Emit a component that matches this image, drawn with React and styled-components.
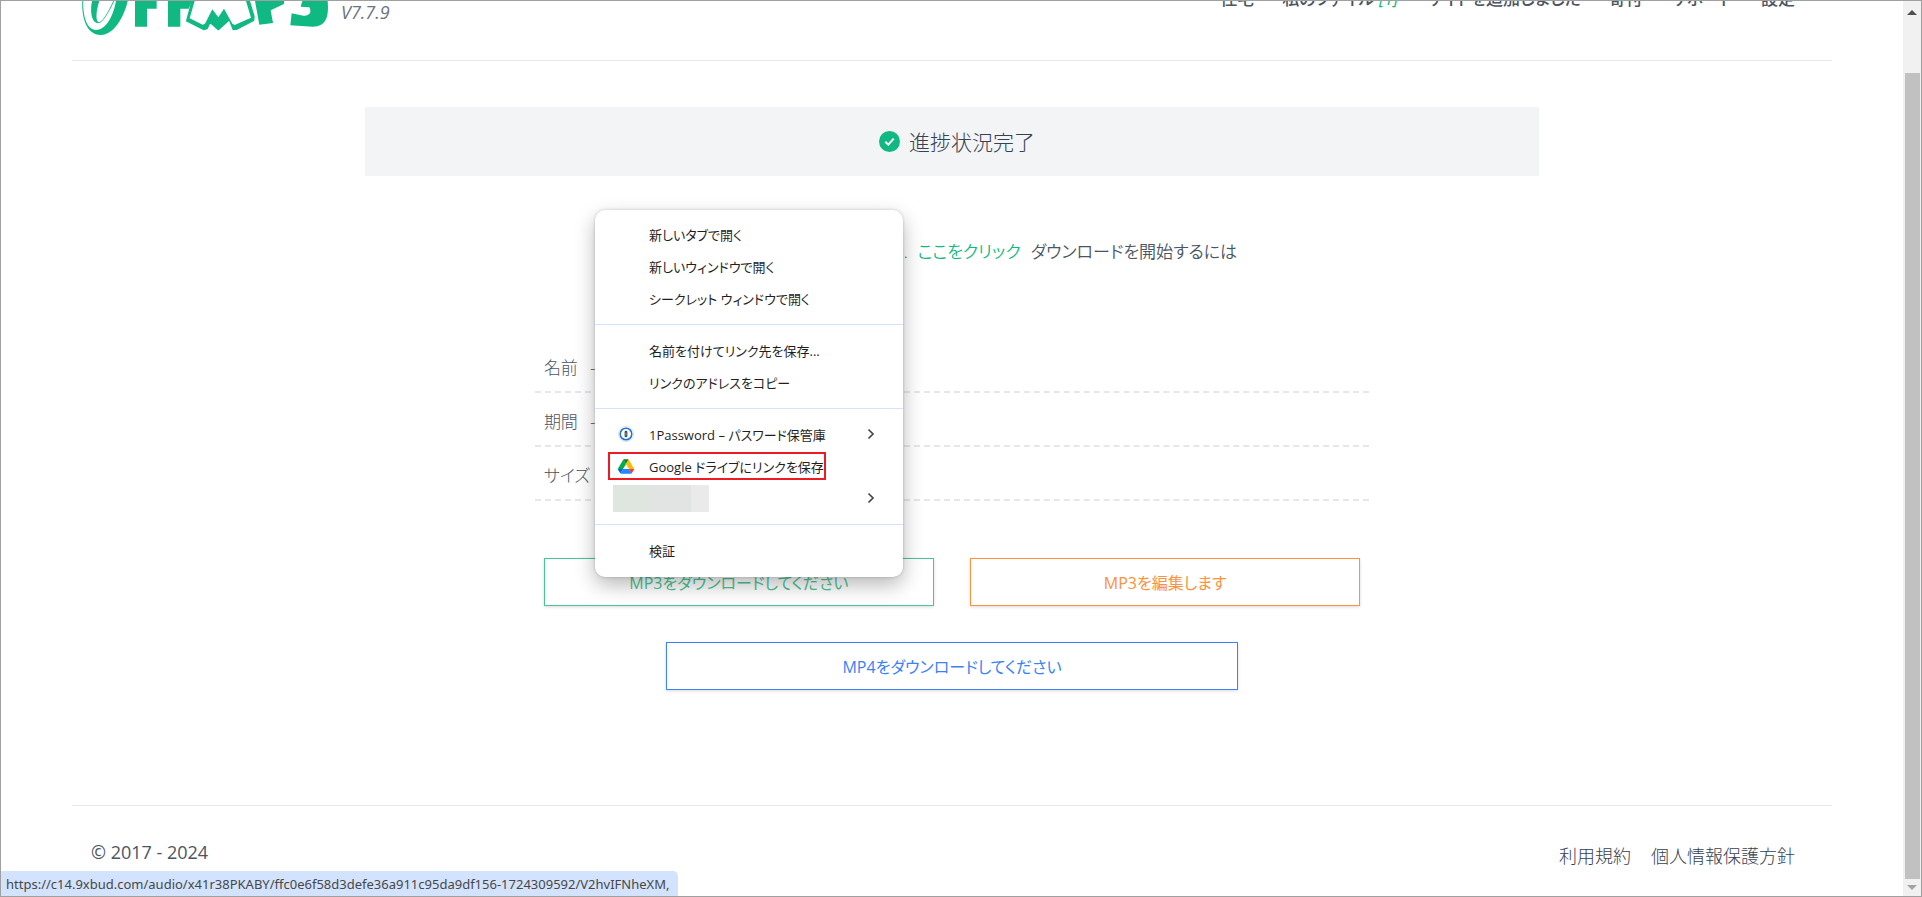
import React from 'react'
import styled, { createGlobalStyle } from 'styled-components'

const GlobalStyle = createGlobalStyle`
  *, *::before, *::after {
    box-sizing: border-box;
  }
  body {
    margin: 0;
    background: #fff;
    color: #374151;
    font-family: "Open Sans", "Noto Sans CJK JP", sans-serif;
    font-size: 18px;
    font-weight: 300;
    font-feature-settings: "palt";
  }
  a {
    color: inherit;
    text-decoration: none;
  }
`

const Frame = styled.div`
  position: relative;
  display: flex;
  height: 100vh;
  overflow: hidden;
  border: 1px solid #a0a0a0;
`

const Page = styled.div`
  flex: 1;
  display: flex;
  flex-direction: column;
  padding: 0 71px;
`

const Header = styled.header`
  display: flex;
  justify-content: space-between;
  height: 60px;
  overflow: hidden;
  padding: 0 37px 0 8px;
  border-bottom: 1px solid #e5e7eb;
`

const Brand = styled.a`
  display: flex;
  gap: 11px;
`

const Version = styled.em`
  color: #6b7280;
  font-size: 18px;
  font-weight: 400;
  line-height: 22px;
`

const Nav = styled.nav`
  display: flex;
  gap: 28px;
  margin-top: -15px;
  color: #4b5563;
  font-size: 17px;
  font-weight: 500;
  line-height: 26px;
  white-space: nowrap;
`

const Count = styled.em`
  color: #10b981;
  font-weight: 400;
`

const Main = styled.main`
  flex: 1;
  display: flex;
  flex-direction: column;
  align-items: center;
  padding-top: 46px;
`

const Status = styled.div`
  display: flex;
  align-items: center;
  justify-content: center;
  gap: 9px;
  width: 66.7%;
  height: 69px;
  padding-left: 10px;
  background: #f3f4f6;
  font-size: 21px;
  line-height: 30px;
`

const Notice = styled.p`
  display: flex;
  gap: 10px;
  margin: 61px 0 72px;
  font-size: 17px;
  font-weight: 350;
  color: #4b5563;
  line-height: 30px;
  white-space: nowrap;
`

const GreenLink = styled.a`
  && {
    color: #10b981;
  }
`

const Details = styled.dl`
  width: 47.4%;
  margin: 0;
`

const DetailRow = styled.div`
  display: flex;
  gap: 12px;
  height: 54px;
  padding: 12px 9px 0;
  border-bottom: 2px dashed #e5e7eb;
  color: #4b5563;
  font-size: 17px;
  line-height: 34px;

  dd {
    margin: 0;
  }
`

const Actions = styled.div`
  display: flex;
  flex-wrap: wrap;
  justify-content: center;
  gap: 36px;
  width: 46.4%;
  margin-top: 57px;
`

const ActionButton = styled.button`
  flex: ${(props) => (props.$wide ? '0 0 70%' : '1 0 40%')};
  height: 48px;
  padding: 0;
  border: 1px solid ${(props) => props.$color};
  background: #fff;
  box-shadow: 0 1px 3px rgba(0, 0, 0, 0.15);
  color: ${(props) => props.$color};
  font: inherit;
  font-size: 16px;
  font-weight: 400;
  font-feature-settings: inherit;
  cursor: pointer;
`

const Footer = styled.footer`
  display: flex;
  justify-content: space-between;
  height: 91px;
  padding: 30px 37px 0 19px;
  border-top: 1px solid #e5e7eb;
  line-height: 32px;
`

const Copyright = styled.span`
  color: #4b5563;
  font-size: 18px;
  font-weight: 400;
`

const FooterLinks = styled.div`
  display: flex;
  gap: 20px;
  padding-top: 4px;
`

const Scrollbar = styled.div`
  display: flex;
  flex-direction: column;
  align-items: center;
  width: 18px;
  padding: 9px 0 6px;
  background: #f1f1f1;
`

const Thumb = styled.div`
  flex: 1;
  width: 15px;
  margin: 58px 0 6px;
  background: #c1c1c1;
`

const Menu = styled.div`
  position: absolute;
  top: 209px;
  left: 594px;
  width: 308px;
  padding: 9px 0 10px;
  border-radius: 10px;
  background: #fff;
  box-shadow: 0 8px 20px rgba(0, 0, 0, 0.28), 0 0 3px rgba(0, 0, 0, 0.2);
`

const Separator = styled.hr`
  height: 1px;
  margin: 9px 0 10px;
  border: 0;
  background: #d3e3fd;
`

const MenuItem = styled.button`
  display: flex;
  align-items: center;
  justify-content: space-between;
  width: 100%;
  height: 32px;
  padding: 0 28px 2px 13px;
  border: 0;
  background: none;
  color: #1f1f1f;
  font: inherit;
  font-size: 13px;
  font-weight: 400;
  font-feature-settings: inherit;
  white-space: nowrap;
`

const ItemBody = styled.span`
  display: flex;
  align-items: center;
  height: 28px;
  border: 2px solid ${(props) => (props.$marked ? '#ed1c24' : 'transparent')};
`

const IconSlot = styled.span`
  display: flex;
  width: 39px;
  padding-left: 8px;
`

const Redacted = styled.span`
  width: 96px;
  height: 27px;
  margin-left: 5px;
  background: linear-gradient(90deg, #dfe6e0 38px, #e2e4e3 38px 78px, #eaeaea 78px);
`

const LinkStatus = styled.div`
  position: absolute;
  bottom: 0;
  left: 0;
  height: 25px;
  padding: 0 9px 0 5px;
  border-top-right-radius: 5px;
  background: #d3e3fd;
  color: #474747;
  font-family: "Noto Sans", sans-serif;
  font-size: 13px;
  font-weight: 400;
  line-height: 26px;
`

const Logo = () => (
  <svg width="250" height="35" viewBox="30 0 750 105" role="img" aria-label="OFFMP3">
    <g fill="#10b981">
      <path d="M37 0C34 50 50 102 92 102C130 102 162 50 173 0Z" />
      <path fill="#fff" d="M40 0C38 45 50 86 78 87C108 86 130 45 138 0Z" />
      <path d="M66 0C58 40 68 66 84 67C100 66 118 30 133 0Z" />
      <path fill="#fff" d="M88 0C78 30 76 60 86 64C100 62 118 25 130 0Z" />
      <path d="M195 0H260V23H231V77H195ZM294 0H366L356 23H331V77H294Z" />
      <path
        d="M366 0L350 60L402 86L412 82L420 64L445 86L478 56L490 86L502 84L551 58L552 46L538 0Z"
        stroke="#10b981"
        strokeWidth="4"
        strokeLinejoin="round"
      />
      <path fill="#fff" d="M374 0L359 52L398 71L405 68L427 25L445 49L462 23L487 68L494 72L543 50L528 0Z" />
      <path d="M555 0H642V9L602 28L609 66L568 71Z" />
      <path d="M697 0H773C777 45 770 77 728 77L661 73L665 37L700 44C716 46 727 36 718 19L692 17Z" />
    </g>
  </svg>
)

const CheckIcon = () => (
  <svg width="21" height="21" viewBox="0 0 21 21" aria-hidden="true">
    <circle cx="10.5" cy="10.5" r="10.5" fill="#10b981" />
    <path d="M6.3 10.7L9.3 13.6L14.7 7.6" fill="none" stroke="#fff" strokeWidth="2" />
  </svg>
)

const Chevron = () => (
  <svg width="8" height="12" viewBox="0 0 8 12" aria-hidden="true">
    <path d="M1.5 1.5L6 6L1.5 10.5" fill="none" stroke="#474747" strokeWidth="1.7" />
  </svg>
)

const OnePasswordIcon = () => (
  <svg width="16" height="16" viewBox="0 0 16 16" aria-hidden="true">
    <circle cx="8" cy="8" r="7.6" fill="#fff" stroke="#d5d5d5" strokeWidth=".7" />
    <circle cx="8" cy="8" r="5.8" fill="#fff" stroke="#1a73d9" strokeWidth="1.5" />
    <rect x="6.6" y="4.8" width="2.8" height="6.4" rx="1.2" fill="#444b55" />
    <path d="M8 6.5V9.5" stroke="#aaa" strokeWidth=".8" />
  </svg>
)

const DriveIcon = () => (
  <svg width="16" height="15" viewBox="0 0 87.3 78" aria-hidden="true">
    <path d="m6.6 66.85 3.85 6.65c.8 1.4 1.95 2.5 3.3 3.3l13.75-23.8h-27.5c0 1.55.4 3.1 1.2 4.5z" fill="#0066da" />
    <path d="m43.65 25-13.75-23.8c-1.35.8-2.5 1.9-3.3 3.3l-25.4 44a9.06 9.06 0 0 0 -1.2 4.5h27.5z" fill="#00ac47" />
    <path d="m73.55 76.8c1.35-.8 2.5-1.9 3.3-3.3l1.6-2.75 7.65-13.25c.8-1.4 1.2-2.95 1.2-4.5h-27.5l5.85 11.5z" fill="#ea4335" />
    <path d="m43.65 25 13.75-23.8c-1.35-.8-2.9-1.2-4.5-1.2h-18.5c-1.6 0-3.15.45-4.5 1.2z" fill="#00832d" />
    <path d="m59.8 53h-32.3l-13.75 23.8c1.35.8 2.9 1.2 4.5 1.2h50.8c1.6 0 3.15-.45 4.5-1.2z" fill="#2684fc" />
    <path d="m73.4 26.5-12.7-22c-.8-1.4-1.95-2.5-3.3-3.3l-13.75 23.8 16.15 28h27.45c0-1.55-.4-3.1-1.2-4.5z" fill="#ffba00" />
  </svg>
)

const Item = ({ icon, marked, submenu, children }) => (
  <MenuItem role="menuitem">
    <ItemBody $marked={marked}>
      <IconSlot>{icon}</IconSlot>
      {children}
    </ItemBody>
    {submenu && <Chevron />}
  </MenuItem>
)

const details = ['名前', '期間', 'サイズ']

export default function App() {
  return (
    <Frame>
      <GlobalStyle />
      <Page>
        <Header>
          <Brand href="#">
            <Logo />
            <Version>V7.7.9</Version>
          </Brand>
          <Nav>
            <a href="#">住宅</a>
            <a href="#">私のファイル <Count>[1]</Count></a>
            <a href="#">サイトを追加しました</a>
            <a href="#">寄付</a>
            <a href="#">サポート</a>
            <a href="#">設定</a>
          </Nav>
        </Header>
        <Main>
          <Status>
            <CheckIcon />
            進捗状況完了
          </Status>
          <Notice>
            <span>音声ファイルの準備ができました.</span>
            <GreenLink href="#">ここをクリック</GreenLink>
            <span>ダウンロードを開始するには</span>
          </Notice>
          <Details>
            {details.map((label) => (
              <DetailRow key={label}>
                <dt>{label}</dt>
                <dd>-</dd>
              </DetailRow>
            ))}
          </Details>
          <Actions>
            <ActionButton $color="#4ac596">MP3をダウンロードしてください</ActionButton>
            <ActionButton $color="#fb923c">MP3を編集します</ActionButton>
            <ActionButton $color="#3b82f6" $wide>MP4をダウンロードしてください</ActionButton>
          </Actions>
        </Main>
        <Footer>
          <Copyright>© 2017 - 2024</Copyright>
          <FooterLinks>
            <a href="#">利用規約</a>
            <a href="#">個人情報保護方針</a>
          </FooterLinks>
        </Footer>
      </Page>
      <Scrollbar>
        <svg width="10" height="5" viewBox="0 0 10 5"><path d="M0 5L5 0L10 5Z" fill="#505050" /></svg>
        <Thumb />
        <svg width="10" height="5" viewBox="0 0 10 5"><path d="M0 0L5 5L10 0Z" fill="#a3a3a3" /></svg>
      </Scrollbar>

      <Menu role="menu">
        <Item>新しいタブで開く</Item>
        <Item>新しいウィンドウで開く</Item>
        <Item>シークレット ウィンドウで開く</Item>
        <Separator />
        <Item>名前を付けてリンク先を保存...</Item>
        <Item>リンクのアドレスをコピー</Item>
        <Separator />
        <Item icon={<OnePasswordIcon />} submenu>1Password – パスワード保管庫</Item>
        <Item icon={<DriveIcon />} marked>Google ドライブにリンクを保存</Item>
        <MenuItem role="menuitem">
          <Redacted />
          <Chevron />
        </MenuItem>
        <Separator />
        <Item>検証</Item>
      </Menu>

      <LinkStatus>https://c14.9xbud.com/audio/x41r38PKABY/ffc0e6f58d3defe36a911c95da9df156-1724309592/V2hvIFNheXM,</LinkStatus>
    </Frame>
  )
}
